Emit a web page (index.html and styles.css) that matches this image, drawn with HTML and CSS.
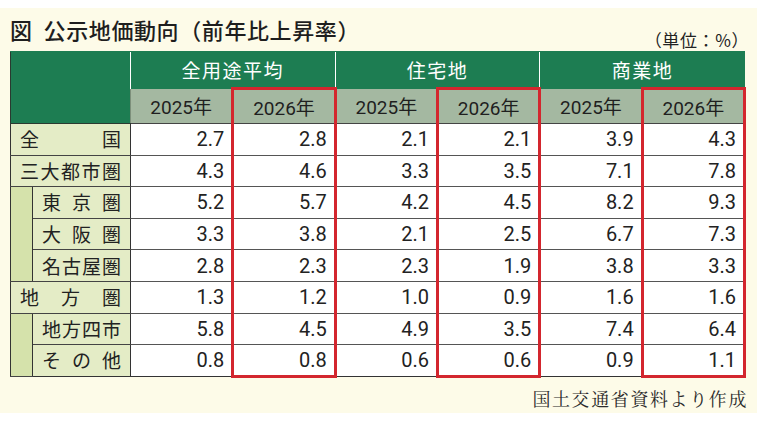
FILE: index.html
```html
<!DOCTYPE html>
<html lang="ja">
<head>
<meta charset="utf-8">
<title>公示地価動向</title>
<link rel="stylesheet" href="styles.css">
</head>
<body>
<div class="panel">
  <div class="top">
    <h1 class="title">図<span class="gap"></span>公示地価動向（前年比上昇率）</h1>
    <div class="unit">（単位：%）</div>
  </div>
  <table class="grid">
    <colgroup>
      <col class="c-strip"><col class="c-label">
      <col><col><col><col><col><col>
    </colgroup>
    <thead>
      <tr class="h1">
        <th class="corner" colspan="2" rowspan="2"></th>
        <th colspan="2" class="grp">全用途平均</th>
        <th colspan="2" class="grp">住宅地</th>
        <th colspan="2" class="grp">商業地</th>
      </tr>
      <tr class="h2">
        <th>2025年</th><th class="hl">2026年</th>
        <th>2025年</th><th class="hl">2026年</th>
        <th>2025年</th><th class="hl">2026年</th>
      </tr>
    </thead>
    <tbody>
      <tr>
        <th colspan="2" class="lab"><span class="sp"><i>全</i><i>国</i></span></th>
        <td>2.7</td><td class="hl">2.8</td><td>2.1</td><td class="hl">2.1</td><td>3.9</td><td class="hl">4.3</td>
      </tr>
      <tr>
        <th colspan="2" class="lab"><span class="sp"><i>三</i><i>大</i><i>都</i><i>市</i><i>圏</i></span></th>
        <td>4.3</td><td class="hl">4.6</td><td>3.3</td><td class="hl">3.5</td><td>7.1</td><td class="hl">7.8</td>
      </tr>
      <tr>
        <th rowspan="3" class="strip"></th>
        <th class="lab"><span class="sp"><i>東</i><i>京</i><i>圏</i></span></th>
        <td>5.2</td><td class="hl">5.7</td><td>4.2</td><td class="hl">4.5</td><td>8.2</td><td class="hl">9.3</td>
      </tr>
      <tr>
        <th class="lab"><span class="sp"><i>大</i><i>阪</i><i>圏</i></span></th>
        <td>3.3</td><td class="hl">3.8</td><td>2.1</td><td class="hl">2.5</td><td>6.7</td><td class="hl">7.3</td>
      </tr>
      <tr>
        <th class="lab"><span class="sp"><i>名</i><i>古</i><i>屋</i><i>圏</i></span></th>
        <td>2.8</td><td class="hl">2.3</td><td>2.3</td><td class="hl">1.9</td><td>3.8</td><td class="hl">3.3</td>
      </tr>
      <tr>
        <th colspan="2" class="lab"><span class="sp"><i>地</i><i>方</i><i>圏</i></span></th>
        <td>1.3</td><td class="hl">1.2</td><td>1.0</td><td class="hl">0.9</td><td>1.6</td><td class="hl">1.6</td>
      </tr>
      <tr>
        <th rowspan="2" class="strip"></th>
        <th class="lab"><span class="sp"><i>地</i><i>方</i><i>四</i><i>市</i></span></th>
        <td>5.8</td><td class="hl">4.5</td><td>4.9</td><td class="hl">3.5</td><td>7.4</td><td class="hl">6.4</td>
      </tr>
      <tr class="last">
        <th class="lab"><span class="sp"><i>そ</i><i>の</i><i>他</i></span></th>
        <td>0.8</td><td class="hl">0.8</td><td>0.6</td><td class="hl">0.6</td><td>0.9</td><td class="hl">1.1</td>
      </tr>
    </tbody>
  </table>
  <div class="source">国土交通省資料より作成</div>
</div>
</body>
</html>
```

FILE: styles.css
```css
html, body {
  margin: 0;
  padding: 0;
  background: #ffffff;
}

body {
  font-family: "Noto Sans CJK JP", "Noto Sans", sans-serif;
  color: #222;
}

.panel {
  margin-top: 8px;
  height: 405px;
  box-sizing: border-box;
  background: #fdfbe8;
  padding: 8px 11px 0 10px;
}

.top {
  display: flex;
  justify-content: space-between;
  height: 35px;
}

.title {
  margin: 0;
  font-size: 22px;
  line-height: 26px;
  font-weight: 500;
  color: #1e1e1e;
  letter-spacing: 0.6px;
}

.gap {
  display: inline-block;
  width: 11px;
}

.unit {
  align-self: flex-end;
  margin-bottom: 1px;
  font-size: 17px;
  line-height: 20px;
  color: #222;
  letter-spacing: 0.6px;
  margin-right: -3px;
}

.grid {
  width: 736px;
  border-collapse: collapse;
  table-layout: fixed;
}

.c-strip { width: 22px; }
.c-label { width: 98px; }

.grid th,
.grid td {
  padding: 0;
}

.grid .h1 th {
  height: 35px;
  background: #1d7d52;
  color: #ffffff;
  font-weight: 400;
  font-size: 19px;
  letter-spacing: 1.5px;
  border-left: 1px solid #ffffff;
  border-top: 1px solid #1d7d52;
}

.grid .h1 th.corner {
  border-left: 1px solid #2a3a30;
  border-bottom: 1px solid #2a3a30;
}

.grid .h2 th {
  height: 33px;
  background: #a4b8a1;
  font-family: Roboto, "Noto Sans CJK JP", sans-serif;
  font-weight: 400;
  font-size: 19px;
  color: #1f1f1f;
  border-left: 1px solid #7d8f7b;
  border-right: 1px solid #7d8f7b;
  border-bottom: 1px solid #444;
}

.grid tbody tr {
  height: 31.6px;
}

.grid tbody td {
  background: #ffffff;
  text-align: right;
  padding-right: 7px;
  font-family: Roboto, "Liberation Sans", sans-serif;
  font-size: 20px;
  line-height: 24px;
  color: #222;
  border-top: 1px solid #555;
  border-bottom: 1px solid #555;
  border-left: 1px solid #777;
}

.grid th.lab {
  background: #e4ecc6;
  font-weight: 400;
  font-size: 19px;
  color: #222;
  border-top: 1px solid #444;
  border-bottom: 1px solid #444;
  border-left: 1px solid #333;
  border-right: 1px solid #333;
  padding: 0 9px 0 9px;
}

.grid th.strip {
  background: #d5e2ab;
  border-left: 1px solid #333;
  border-right: 1px solid #333;
  border-top: 1px solid #444;
  border-bottom: 1px solid #444;
}

.sp {
  display: flex;
  justify-content: space-between;
  line-height: 24px;
}

.sp i {
  font-style: normal;
}

.grid tr.last td,
.grid tr.last th {
  border-bottom: 1px solid #333;
}

.grid .hl,
.grid tbody td.hl,
.grid .h2 th.hl {
  border-left: 3px solid #d3262e;
  border-right: 3px solid #d3262e;
}

.grid .h2 th.hl {
  border-top: 3px solid #d3262e;
}

.grid tr.last td.hl {
  border-bottom: 3px solid #d3262e;
}

.source {
  margin-top: 9px;
  text-align: right;
  font-family: "Noto Serif CJK JP", "Liberation Serif", "Noto Sans CJK JP", serif;
  font-size: 18px;
  line-height: 22px;
  letter-spacing: 1.6px;
  color: #2a2a2a;
  margin-right: -2px;
}
```
